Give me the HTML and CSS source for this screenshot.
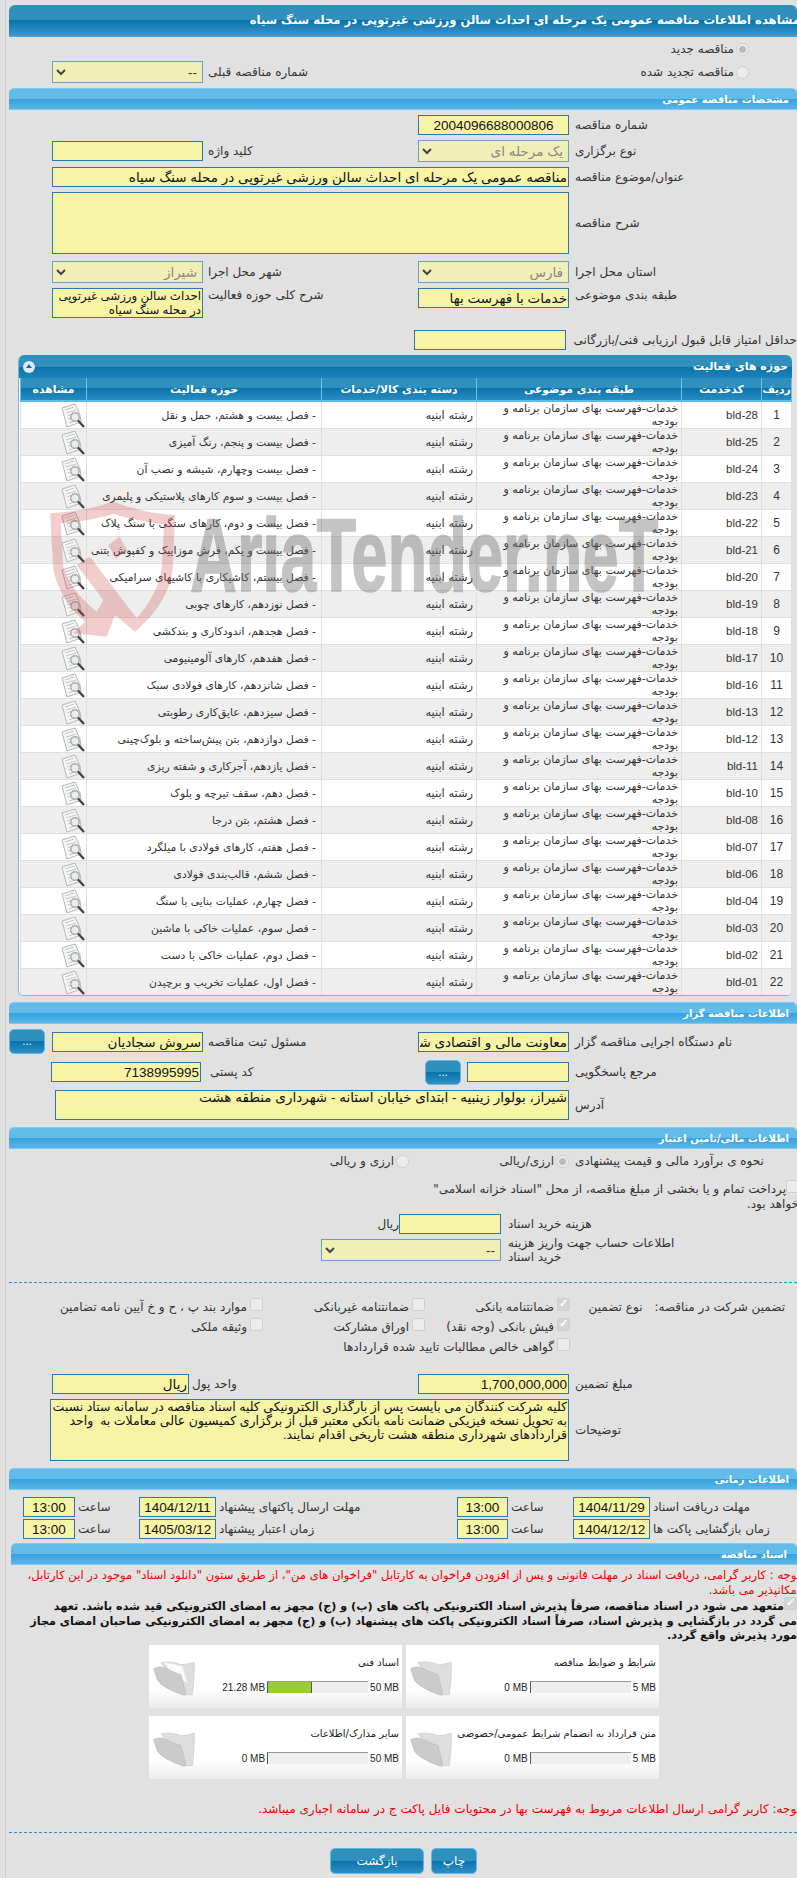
FILE: index.html
```html
<!DOCTYPE html>
<html lang="fa" dir="rtl">
	<head>
		<meta charset="utf-8">
		<title>مشاهده اطلاعات مناقصه</title>
		<link rel="stylesheet" href="styles.css">
	</head>
	<body>
		<svg class="defs" width="0" height="0">
			<symbol id="doc" viewBox="0 0 24 25">
				<path d="M1 5 L14 1 L19 12 L20 19 L6 24 Z" fill="#f6f6f6" stroke="#b5b5b5"/>
				<path d="M4 7 L13 4 M5 10 L15 7 M6 13 L11 11 M7 16 L10 15 M8 20 L14 18" stroke="#c4c4c4" fill="none"/>
				<circle cx="14" cy="14" r="4.2" fill="#e8eef0" stroke="#a9a9a9" stroke-width="1.4"/>
				<path d="M17 17.5 L23 24" stroke="#444" stroke-width="2.4"/>
			</symbol>
			<symbol id="folder" viewBox="0 0 126 108">
				<path d="M24 8 Q60 2 84 14 Q105 14 124 6 Q126 50 118 104 L94 104 Z" fill="#dedede" stroke="#cacaca" stroke-width="2"/>
				<path d="M2 26 Q20 16 40 26 Q70 40 84 44 L98 100 Q100 107 90 105 Q30 84 14 62 Z" fill="#cbcbcb" stroke="#b9b9b9" stroke-width="2"/>
			</symbol>
			<symbol id="folder-full" viewBox="0 0 126 108">
				<path d="M24 8 Q60 2 84 14 Q105 14 124 6 Q126 50 118 104 L94 104 Z" fill="#dedede" stroke="#cacaca" stroke-width="2"/>
				<path d="M30 6 L88 18 L104 70 L60 40 Z" fill="#fbfbfb" stroke="#e6e6e6" stroke-width="2"/>
				<path d="M2 26 Q20 16 40 26 Q70 40 84 44 L98 100 Q100 107 90 105 Q30 84 14 62 Z" fill="#cbcbcb" stroke="#b9b9b9" stroke-width="2"/>
			</symbol>
		</svg>

		<div class="page">
			<div class="bar-main"><span>مشاهده اطلاعات مناقصه عمومی یک مرحله ای احداث سالن ورزشی غیرتوپی در محله سنگ سیاه</span></div>

			<div class="radio-row"><input type="radio" name="kind" checked disabled><label>مناقصه جدید</label></div>
			<div class="grid mt5 h22">
				<div class="radio-cell"><input type="radio" name="kind" disabled><label>مناقصه تجدید شده</label></div>
				<label class="lbl2">شماره مناقصه قبلی</label>
				<select class="sel dark" disabled><option>--</option></select>
			</div>

			<div class="bar">مشخصات مناقصه عمومی</div>
			<div class="grid mt5 h20">
				<label class="lbl">شماره مناقصه</label>
				<input class="txt center" value="2004096688000806">
			</div>
			<div class="grid mt5 h22">
				<label class="lbl">نوع برگزاری</label>
				<select class="sel" disabled><option>یک مرحله ای</option></select>
				<label class="lbl2">کلید واژه</label>
				<input class="txt">
			</div>
			<div class="grid mt5 h20">
				<label class="lbl">عنوان/موضوع مناقصه</label>
				<input class="txt wide" value="مناقصه عمومی یک مرحله ای احداث سالن ورزشی غیرتوپی در محله سنگ سیاه">
			</div>
			<div class="grid mt5 h62">
				<label class="lbl">شرح مناقصه</label>
				<textarea class="txt wide"></textarea>
			</div>
			<div class="grid mt7 h22">
				<label class="lbl">استان محل اجرا</label>
				<select class="sel" disabled><option>فارس</option></select>
				<label class="lbl2">شهر محل اجرا</label>
				<select class="sel" disabled><option>شیراز</option></select>
			</div>
			<div class="grid mt5 h30 top">
				<label class="lbl">طبقه بندی موضوعی</label>
				<input class="txt h20" value="خدمات با فهرست بها">
				<label class="lbl2">شرح کلی حوزه فعالیت</label>
				<textarea class="txt scope">احداث سالن ورزشی غیرتوپی در محله سنگ سیاه</textarea>
			</div>
			<div class="grid mt12 h20">
				<label class="lbl">حداقل امتیاز قابل قبول ارزیابی فنی/بازرگانی</label>
				<input class="txt score">
			</div>

			<div class="panel">
				<div class="panel-head">
					<span>حوزه های فعالیت</span>
					<span class="toggle"></span>
				</div>
				<table class="acts">
					<colgroup>
						<col class="c-num"><col class="c-code"><col class="c-subj"><col class="c-cat"><col class="c-act"><col class="c-view">
					</colgroup>
					<thead>
						<tr><th>ردیف</th><th>کدخدمت</th><th>طبقه بندی موضوعی</th><th>دسته بندی کالا/خدمات</th><th>حوزه فعالیت</th><th>مشاهده</th></tr>
					</thead>
					<tbody>
						<tr><td class="mid">1</td><td class="code">bld-28</td><td class="subj">خدمات-فهرست بهای سازمان برنامه و بودجه</td><td>رشته ابنیه</td><td class="act">- فصل بیست و هشتم، حمل و نقل</td><td class="view"><svg><use href="#doc"/></svg></td></tr>
						<tr><td class="mid">2</td><td class="code">bld-25</td><td class="subj">خدمات-فهرست بهای سازمان برنامه و بودجه</td><td>رشته ابنیه</td><td class="act">- فصل بیست و پنجم، رنگ آمیزی</td><td class="view"><svg><use href="#doc"/></svg></td></tr>
						<tr><td class="mid">3</td><td class="code">bld-24</td><td class="subj">خدمات-فهرست بهای سازمان برنامه و بودجه</td><td>رشته ابنیه</td><td class="act">- فصل بیست وچهارم، شیشه و نصب آن</td><td class="view"><svg><use href="#doc"/></svg></td></tr>
						<tr><td class="mid">4</td><td class="code">bld-23</td><td class="subj">خدمات-فهرست بهای سازمان برنامه و بودجه</td><td>رشته ابنیه</td><td class="act">- فصل بیست و سوم کارهای پلاستیکی و پلیمری</td><td class="view"><svg><use href="#doc"/></svg></td></tr>
						<tr><td class="mid">5</td><td class="code">bld-22</td><td class="subj">خدمات-فهرست بهای سازمان برنامه و بودجه</td><td>رشته ابنیه</td><td class="act">- فصل بیست و دوم، کارهای سنگی با سنگ پلاک</td><td class="view"><svg><use href="#doc"/></svg></td></tr>
						<tr><td class="mid">6</td><td class="code">bld-21</td><td class="subj">خدمات-فهرست بهای سازمان برنامه و بودجه</td><td>رشته ابنیه</td><td class="act">- فصل بیست و یکم، فرش موزاییک و کفپوش بتنی</td><td class="view"><svg><use href="#doc"/></svg></td></tr>
						<tr><td class="mid">7</td><td class="code">bld-20</td><td class="subj">خدمات-فهرست بهای سازمان برنامه و بودجه</td><td>رشته ابنیه</td><td class="act">- فصل بیستم، کاشیکاری با کاشیهای سرامیکی</td><td class="view"><svg><use href="#doc"/></svg></td></tr>
						<tr><td class="mid">8</td><td class="code">bld-19</td><td class="subj">خدمات-فهرست بهای سازمان برنامه و بودجه</td><td>رشته ابنیه</td><td class="act">- فصل نوزدهم، کارهای چوبی</td><td class="view"><svg><use href="#doc"/></svg></td></tr>
						<tr><td class="mid">9</td><td class="code">bld-18</td><td class="subj">خدمات-فهرست بهای سازمان برنامه و بودجه</td><td>رشته ابنیه</td><td class="act">- فصل هجدهم، اندودکاری و بندکشی</td><td class="view"><svg><use href="#doc"/></svg></td></tr>
						<tr><td class="mid">10</td><td class="code">bld-17</td><td class="subj">خدمات-فهرست بهای سازمان برنامه و بودجه</td><td>رشته ابنیه</td><td class="act">- فصل هفدهم، کارهای آلومینیومی</td><td class="view"><svg><use href="#doc"/></svg></td></tr>
						<tr><td class="mid">11</td><td class="code">bld-16</td><td class="subj">خدمات-فهرست بهای سازمان برنامه و بودجه</td><td>رشته ابنیه</td><td class="act">- فصل شانزدهم، کارهای فولادی سبک</td><td class="view"><svg><use href="#doc"/></svg></td></tr>
						<tr><td class="mid">12</td><td class="code">bld-13</td><td class="subj">خدمات-فهرست بهای سازمان برنامه و بودجه</td><td>رشته ابنیه</td><td class="act">- فصل سیزدهم، عایق‌کاری رطوبتی</td><td class="view"><svg><use href="#doc"/></svg></td></tr>
						<tr><td class="mid">13</td><td class="code">bld-12</td><td class="subj">خدمات-فهرست بهای سازمان برنامه و بودجه</td><td>رشته ابنیه</td><td class="act">- فصل دوازدهم، بتن پیش‌ساخته و بلوک‌چینی</td><td class="view"><svg><use href="#doc"/></svg></td></tr>
						<tr><td class="mid">14</td><td class="code">bld-11</td><td class="subj">خدمات-فهرست بهای سازمان برنامه و بودجه</td><td>رشته ابنیه</td><td class="act">- فصل یازدهم، آجرکاری و شفته ریزی</td><td class="view"><svg><use href="#doc"/></svg></td></tr>
						<tr><td class="mid">15</td><td class="code">bld-10</td><td class="subj">خدمات-فهرست بهای سازمان برنامه و بودجه</td><td>رشته ابنیه</td><td class="act">- فصل دهم، سقف تیرچه و بلوک</td><td class="view"><svg><use href="#doc"/></svg></td></tr>
						<tr><td class="mid">16</td><td class="code">bld-08</td><td class="subj">خدمات-فهرست بهای سازمان برنامه و بودجه</td><td>رشته ابنیه</td><td class="act">- فصل هشتم، بتن درجا</td><td class="view"><svg><use href="#doc"/></svg></td></tr>
						<tr><td class="mid">17</td><td class="code">bld-07</td><td class="subj">خدمات-فهرست بهای سازمان برنامه و بودجه</td><td>رشته ابنیه</td><td class="act">- فصل هفتم، کارهای فولادی با میلگرد</td><td class="view"><svg><use href="#doc"/></svg></td></tr>
						<tr><td class="mid">18</td><td class="code">bld-06</td><td class="subj">خدمات-فهرست بهای سازمان برنامه و بودجه</td><td>رشته ابنیه</td><td class="act">- فصل ششم، قالب‌بندی فولادی</td><td class="view"><svg><use href="#doc"/></svg></td></tr>
						<tr><td class="mid">19</td><td class="code">bld-04</td><td class="subj">خدمات-فهرست بهای سازمان برنامه و بودجه</td><td>رشته ابنیه</td><td class="act">- فصل چهارم، عملیات بنایی با سنگ</td><td class="view"><svg><use href="#doc"/></svg></td></tr>
						<tr><td class="mid">20</td><td class="code">bld-03</td><td class="subj">خدمات-فهرست بهای سازمان برنامه و بودجه</td><td>رشته ابنیه</td><td class="act">- فصل سوم، عملیات خاکی با ماشین</td><td class="view"><svg><use href="#doc"/></svg></td></tr>
						<tr><td class="mid">21</td><td class="code">bld-02</td><td class="subj">خدمات-فهرست بهای سازمان برنامه و بودجه</td><td>رشته ابنیه</td><td class="act">- فصل دوم، عملیات خاکی با دست</td><td class="view"><svg><use href="#doc"/></svg></td></tr>
						<tr><td class="mid">22</td><td class="code">bld-01</td><td class="subj">خدمات-فهرست بهای سازمان برنامه و بودجه</td><td>رشته ابنیه</td><td class="act">- فصل اول، عملیات تخریب و برچیدن</td><td class="view"><svg><use href="#doc"/></svg></td></tr>
					</tbody>
				</table>
			</div>

			<div class="bar mt6">اطلاعات مناقصه گزار</div>
			<div class="grid mt5 h25">
				<label class="lbl">نام دستگاه اجرایی مناقصه گزار</label>
				<input class="txt" value="معاونت مالی و اقتصادی شهرداری">
				<label class="lbl2">مسئول ثبت مناقصه</label>
				<input class="txt" value="سروش سجادیان">
				<button class="btn dots">...</button>
			</div>
			<div class="grid mt5 h26">
				<label class="lbl">مرجع پاسخگویی</label>
				<div class="ref-cell">
					<input class="txt ref">
					<button class="btn dots">...</button>
				</div>
				<label class="lbl2 postal-lbl">کد پستی</label>
				<input class="txt postal" value="7138995995">
			</div>
			<div class="grid mt5 h30">
				<label class="lbl">آدرس</label>
				<textarea class="txt wide address">شیراز، بولوار زینبیه - ابتدای خیابان آستانه - شهرداری منطقه هشت</textarea>
			</div>

			<div class="bar mt7">اطلاعات مالی/تامین اعتبار</div>
			<div class="grid mt5 h14">
				<label class="lbl">نحوه ی برآورد مالی و قیمت پیشنهادی</label>
				<div class="radio-in"><input type="radio" name="cur" checked disabled><label>ارزی/ریالی</label></div>
				<div class="radio-in second"><input type="radio" name="cur" disabled><label>ارزی و ریالی</label></div>
			</div>
			<p class="treasury"><input type="checkbox" disabled>پرداخت تمام و یا بخشی از مبلغ مناقصه، از محل "اسناد خزانه اسلامی"<br>خواهد بود.</p>
			<div class="doc-row mt5 h20">
				<label class="lbl doc-lbl">هزینه خرید اسناد</label>
				<input class="txt fee">
				<span class="unit">ریال</span>
			</div>
			<div class="doc-row mt5 h22">
				<label class="lbl doc-lbl">اطلاعات حساب جهت واریز هزینه<br>خرید اسناد</label>
				<select class="sel dark account" disabled><option>--</option></select>
			</div>

			<div class="dash dash-a"></div>

			<div class="guar">
				<div class="guar-head"><span class="guar-title">تضمین شرکت در مناقصه:</span><span>نوع تضمین</span></div>
				<div class="chk"><input type="checkbox" checked disabled><label>ضمانتنامه بانکی</label></div>
				<div class="chk"><input type="checkbox" disabled><label>ضمانتنامه غیربانکی</label></div>
				<div class="chk"><input type="checkbox" disabled><label>موارد بند پ ، ح و خ آیین نامه تضامین</label></div>
				<div></div>
				<div class="chk"><input type="checkbox" checked disabled><label>فیش بانکی (وجه نقد)</label></div>
				<div class="chk"><input type="checkbox" disabled><label>اوراق مشارکت</label></div>
				<div class="chk"><input type="checkbox" disabled><label>وثیقه ملکی</label></div>
				<div></div>
				<div class="chk guar-long"><input type="checkbox" disabled><label>گواهی خالص مطالبات تایید شده قراردادها</label></div>
			</div>

			<div class="grid mt16 h20">
				<label class="lbl">مبلغ تضمین</label>
				<input class="txt" value="1,700,000,000">
				<div class="unit-cell">
					<label>واحد پول</label>
					<input class="txt currency" value="ریال">
				</div>
			</div>
			<div class="grid mt5 h62">
				<label class="lbl">توضیحات</label>
				<textarea class="txt wide note">کلیه شرکت کنندگان می بایست پس از بارگذاری الکترونیکی کلیه اسناد مناقصه در سامانه ستاد نسبت به تحویل نسخه فیزیکی ضمانت نامه بانکی معتبر قبل از برگزاری کمیسیون عالی معاملات به  واحد قراردادهای شهرداری منطقه هشت تاریخی اقدام نمایند.</textarea>
			</div>

			<div class="bar mt7">اطلاعات زمانی</div>
			<div class="times mt7">
				<label>مهلت دریافت اسناد</label><input class="txt" value="1404/11/29">
				<label>ساعت</label><input class="txt" value="13:00">
				<label>مهلت ارسال پاکتهای پیشنهاد</label><input class="txt" value="1404/12/11">
				<label>ساعت</label><input class="txt" value="13:00">
			</div>
			<div class="times mt2">
				<label>زمان بازگشایی پاکت ها</label><input class="txt" value="1404/12/12">
				<label>ساعت</label><input class="txt" value="13:00">
				<label>زمان اعتبار پیشنهاد</label><input class="txt" value="1405/03/12">
				<label>ساعت</label><input class="txt" value="13:00">
			</div>

			<div class="bar bar-docs">اسناد مناقصه</div>
			<p class="red notice">توجه : کاربر گرامی، دریافت اسناد در مهلت قانونی و پس از افزودن فراخوان به کارتابل "فراخوان های من"، از طریق ستون "دانلود اسناد" موجود در این کارتابل،<br>امکانپذیر می باشد.</p>
			<p class="pledge"><input type="checkbox" checked disabled>متعهد می شود در اسناد مناقصه، صرفاً پذیرش اسناد الکترونیکی پاکت های (ب) و (ج) مجهز به امضای الکترونیکی قید شده باشد. تعهد<br>می گردد در بازگشایی و پذیرش اسناد، صرفاً اسناد الکترونیکی پاکت های پیشنهاد (ب) و (ج) مجهز به امضای الکترونیکی صاحبان امضای مجاز<br>مورد پذیرش واقع گردد.</p>

			<div class="cards">
				<div class="card">
					<div class="card-body">
						<div class="card-title">شرایط و ضوابط مناقصه</div>
						<div class="meter"><span class="mb">5 MB</span><span class="track"></span><span class="mb">0 MB</span></div>
					</div>
					<svg class="folder"><use href="#folder"/></svg>
				</div>
				<div class="card">
					<div class="card-body">
						<div class="card-title">اسناد فنی</div>
						<div class="meter"><span class="mb">50 MB</span><span class="track"><span class="fill"></span></span><span class="mb">21.28 MB</span></div>
					</div>
					<svg class="folder"><use href="#folder-full"/></svg>
				</div>
				<div class="card">
					<div class="card-body">
						<div class="card-title">متن قرارداد به انضمام شرایط عمومی/خصوصی</div>
						<div class="meter"><span class="mb">5 MB</span><span class="track"></span><span class="mb">0 MB</span></div>
					</div>
					<svg class="folder"><use href="#folder"/></svg>
				</div>
				<div class="card">
					<div class="card-body">
						<div class="card-title">سایر مدارک/اطلاعات</div>
						<div class="meter"><span class="mb">50 MB</span><span class="track"></span><span class="mb">0 MB</span></div>
					</div>
					<svg class="folder"><use href="#folder"/></svg>
				</div>
			</div>

			<p class="red notice2">توجه: کاربر گرامی ارسال اطلاعات مربوط به فهرست بها در محتویات فایل پاکت ج در سامانه اجباری میباشد.</p>
			<div class="dash dash-b"></div>
			<div class="actions">
				<button class="btn print">چاپ</button>
				<button class="btn back">بازگشت</button>
			</div>

			<!-- watermark, lies over the table -->
			<svg class="wm-logo" viewBox="0 0 450 480">
				<path fill-rule="evenodd" d="M30 70 Q130 65 220 35 Q310 70 405 75 L398 240 Q385 340 285 425 L225 375 L200 440 L100 430 L135 395 Q60 330 40 240 Z M62 100 Q140 95 220 72 Q300 95 372 103 L365 235 Q355 310 290 385 L150 200 L110 225 L190 330 L170 365 Q90 300 70 230 Z"/>
				<path d="M205 165 L238 140 L262 180 L228 207 Z"/>
			</svg>
			<div class="wm-text">AriaTender.neT</div>
		</div>
	</body>
</html>
```

FILE: styles.css
```css
html, body {
	margin: 0;
	padding: 0;
	background: #e1e1e1;
}
body {
	font-family: "DejaVu Sans", Tahoma, sans-serif;
	font-size: 12px;
	color: #333;
}
.defs {
	position: absolute;
}
.page {
	position: relative;
	width: 797px;
	height: 1878px;
	overflow: hidden;
	box-sizing: border-box;
	padding: 5px 0 0 9px;
	background: linear-gradient(to right, #e1e1e1 5px, #cfcfcf 5px, #cfcfcf 6px, #e1e1e1 6px);
}

/* bars */
.bar-main {
	box-sizing: border-box;
	height: 32px;
	line-height: 30px;
	font-size: 11.6px;
	font-weight: bold;
	color: #fff;
	white-space: nowrap;
	border-radius: 6px 6px 0 0;
	border-bottom: 1px solid #4aa8e4;
	background: linear-gradient(#2f8fbd 0, #2f8fbd 50%, #0a72ab 50%, #4097cb 100%);
}
.bar-main span {
	display: inline-block;
	margin-right: -3px;
}
.bar {
	box-sizing: border-box;
	height: 22px;
	margin-top: 5px;
	padding-right: 8px;
	line-height: 21px;
	font-size: 10px;
	font-weight: bold;
	color: #fff;
	border-radius: 5px 5px 0 0;
	border-top: 1px solid #7ccbf2;
	border-bottom: 1px solid #7ccbf2;
	background: linear-gradient(#63bbe9 0, #63bbe9 50%, #36a1e0 50%, #5ab5e7 100%);
}
.bar-docs {
	margin-top: 4px;
	margin-left: 2px;
	padding-right: 10px;
}

/* form rows */
.grid {
	display: grid;
	grid-template-columns: 228px 156px 210px 151px 1fr;
	align-items: center;
}
.top {
	align-items: start;
}
.mt2 { margin-top: 2px; }
.mt5 { margin-top: 5px; }
.mt6 { margin-top: 6px; }
.mt7 { margin-top: 7px; }
.mt12 { margin-top: 12px; }
.mt16 { margin-top: 16px; }
.h14 { height: 14px; }
.h20 { height: 20px; }
.h22 { height: 22px; }
.h25 { height: 25px; }
.h26 { height: 26px; }
.h30 { height: 30px; }
.h62 { height: 62px; }

.lbl, .lbl2 {
	display: block;
	text-align: left;
	white-space: nowrap;
	line-height: 14px;
}
.lbl {
	padding-left: 6px;
}
.lbl2 {
	padding-left: 5px;
}

.txt {
	box-sizing: border-box;
	width: 151px;
	height: 20px;
	margin: 0;
	padding: 0 1px;
	border: 1px solid #2a78ad;
	border-radius: 0;
	outline: none;
	background: #f7f5a5;
	color: #111;
	font-family: "Liberation Sans", "DejaVu Sans", sans-serif;
	font-size: 13.5px;
}
textarea.txt {
	height: 30px;
	resize: none;
	overflow: hidden;
	font-size: 12.5px;
	line-height: 14px;
}
textarea.scope {
	font-size: 11.8px;
}
.center {
	text-align: center;
}
.wide {
	grid-column: span 3;
	width: 517px;
}
.grid textarea.wide {
	height: 100%;
}
.grid textarea.address {
	width: 514px;
	font-size: 13.5px;
}
.grid textarea.note {
	width: 519px;
}
.score {
	width: 152px;
	margin-right: 3px;
}
.postal {
	width: 150px;
	margin-right: 2px;
}
.postal-lbl {
	padding-left: 7px;
}
.ref-cell {
	display: flex;
	align-items: center;
	gap: 6px;
}
.ref {
	width: 102px;
}

.sel {
	box-sizing: border-box;
	width: 151px;
	height: 22px;
	margin: 0;
	padding: 0 5px 0 0;
	appearance: none;
	border: 1px solid #6d9fc0;
	border-radius: 0;
	opacity: 1;
	color: #888;
	font-family: "Liberation Sans", "DejaVu Sans", sans-serif;
	font-size: 13.5px;
	background: #f0efb6 url("data:image/svg+xml,%3Csvg xmlns='http://www.w3.org/2000/svg' width='10' height='7'%3E%3Cpath d='M1 1 L5 5 L9 1' fill='none' stroke='%23444' stroke-width='2'/%3E%3C/svg%3E") no-repeat left 3px center;
}
.dark {
	color: #333;
}
.account {
	width: 180px;
}

input[type=radio], input[type=checkbox] {
	appearance: none;
	box-sizing: border-box;
	flex: none;
	width: 13px;
	height: 13px;
	margin: 0;
	border: 1px solid #cfcfcf;
	background: #ececec;
}
input[type=radio] {
	border-radius: 50%;
	position: relative;
}
input[type=radio]:checked::after {
	content: "";
	position: absolute;
	top: 2px;
	left: 2px;
	width: 7px;
	height: 7px;
	border-radius: 50%;
	background: #bbb;
}
input[type=checkbox] {
	border-radius: 2px;
	position: relative;
}
input[type=checkbox]:checked {
	background: #d4d4d4;
}
input[type=checkbox]:checked::after {
	content: "✓";
	position: absolute;
	top: -2px;
	left: 1px;
	font-size: 11px;
	font-weight: bold;
	color: #fff;
}

.radio-row, .radio-cell, .radio-in {
	display: flex;
	align-items: center;
	gap: 2px;
}
.radio-row {
	height: 14px;
	margin-top: 5px;
	padding-right: 48px;
}
.radio-cell {
	grid-column: span 2;
	padding-right: 48px;
}
.radio-in.second {
	padding-right: 4px;
}

.treasury {
	width: 380px;
	height: 29px;
	margin: 12px -2px 0 0;
	line-height: 14.5px;
	white-space: nowrap;
}
.doc-row {
	display: flex;
	align-items: center;
}
.doc-lbl {
	width: 296px;
	box-sizing: border-box;
	padding-left: 7px;
}
.fee {
	width: 102px;
}
.unit {
	line-height: 14px;
}

.dash {
	border-top: 1px dashed #2c8ec0;
}
.dash-a {
	margin-top: 21px;
}
.dash-b {
	margin-top: 15px;
}

.guar {
	display: grid;
	grid-template-columns: 227px 145px 162px 1fr;
	grid-auto-rows: 20px;
	margin-top: 15px;
}
.guar-head {
	display: flex;
	padding-right: 12px;
	gap: 12px;
	line-height: 18px;
}
.chk {
	display: flex;
	gap: 3px;
	white-space: nowrap;
}
.chk label {
	line-height: 18px;
}
.guar-long {
	grid-column: span 3;
}

.unit-cell {
	grid-column: span 2;
	display: flex;
	align-items: center;
	justify-content: flex-end;
	gap: 3px;
}
.currency {
	width: 137px;
}

.times {
	display: grid;
	grid-template-columns: 147px 77px 65px 51px 241px 77px 64px 52px;
	align-items: center;
	height: 20px;
}
.times label {
	text-align: left;
	padding-left: 3px;
	white-space: nowrap;
}
.times .txt {
	width: 100%;
	text-align: center;
}

/* activity table */
.panel {
	margin: 5px 5px 0 9px;
	height: 641px;
	box-sizing: border-box;
	overflow: hidden;
	background: #fff;
	border-radius: 6px 6px 5px 5px;
	border-bottom: 1px solid #79b6dc;
	border-left: 1px solid #79b6dc;
}
.panel-head {
	display: flex;
	justify-content: space-between;
	align-items: center;
	height: 23px;
	padding: 0 4px 0 4px;
	font-size: 11px;
	font-weight: bold;
	color: #fff;
	background: linear-gradient(#2f8fbd 0, #2f8fbd 50%, #0a72ab 50%, #1d82ba 100%);
}
.toggle {
	position: relative;
	width: 12px;
	height: 12px;
	border-radius: 50%;
	background: #dfe8f4;
}
.toggle::after {
	content: "";
	position: absolute;
	top: 3px;
	left: 3px;
	border-left: 3px solid transparent;
	border-right: 3px solid transparent;
	border-bottom: 4px solid #1f6c9c;
}
.acts {
	width: 771px;
	margin-left: 2px;
	border-collapse: collapse;
	table-layout: fixed;
}
.c-num { width: 30px; }
.c-code { width: 80px; }
.c-subj { width: 205px; }
.c-cat { width: 155px; }
.c-act { width: 235px; }
.c-view { width: 66px; }
.acts th {
	box-sizing: border-box;
	height: 23px;
	padding: 0;
	font-size: 10.8px;
	color: #fff;
	border-left: 1px solid #6ec0ea;
	border-right: 1px solid #6ec0ea;
	border-bottom: 2px solid #5dbbe8;
	background: linear-gradient(#2f8fbd 0, #2f8fbd 45%, #0a72ab 45%, #2a8bc2 100%);
}
.acts td {
	box-sizing: border-box;
	height: 27px;
	padding: 0 3px;
	overflow: hidden;
	line-height: 13px;
	font-size: 11.4px;
	color: #333;
	border: 1px solid #dfdfdf;
}
.acts tbody tr:nth-child(even) {
	background: #eee;
}
.acts .mid {
	text-align: center;
	font-family: "Liberation Sans", sans-serif;
	font-size: 12px;
}
.acts .code {
	direction: ltr;
	text-align: right;
	font-family: "Liberation Sans", sans-serif;
	font-size: 11.5px;
}
.acts .subj {
	font-size: 11px;
}
.acts .act {
	padding: 0 5px 0 0;
	font-size: 10.8px;
	white-space: nowrap;
}
.acts .view {
	padding: 0;
}
.view svg {
	display: block;
	width: 24px;
	height: 25px;
	margin-right: 1px;
}

/* notes */
.red {
	color: #e00;
	margin: 0;
	white-space: nowrap;
	line-height: 14.5px;
}
.notice {
	height: 29px;
	margin: 3px -3px 0 0;
	font-size: 11.6px;
}
.notice2 {
	margin: 23px -3px 0 0;
}
.pledge {
	margin: 0;
	height: 48px;
	font-size: 11.2px;
	font-weight: bold;
	color: #111;
	white-space: nowrap;
	line-height: 14.5px;
}

/* document cards */
.cards {
	display: grid;
	grid-template-columns: 253px 253px;
	grid-auto-rows: 63px;
	gap: 8px 4px;
	margin: 0 138px 0 0;
}
.card {
	display: flex;
	background: linear-gradient(#fff 70%, #ececec 100%);
}
.card-body {
	flex: 1;
	padding: 0 3px 0 4px;
}
.card-title {
	margin-top: 11px;
	line-height: 14px;
	font-size: 10px;
	color: #222;
	white-space: nowrap;
}
.meter {
	display: flex;
	align-items: center;
	gap: 2px;
	margin-top: 11px;
	font-family: "Liberation Sans", sans-serif;
	font-size: 10px;
	color: #222;
}
.mb {
	direction: ltr;
	unicode-bidi: isolate;
}
.track {
	display: block;
	box-sizing: border-box;
	width: 101px;
	height: 12px;
	direction: ltr;
	background: #eee;
	border-top: 1px solid #999;
	border-left: 1px solid #555;
}
.fill {
	display: block;
	width: 43%;
	height: 100%;
	background: #9c3;
	border-right: 1px solid #555;
}
.folder {
	flex: none;
	width: 42px;
	height: 36px;
	margin: 15px 0 0 4px;
}

/* buttons */
.btn {
	box-sizing: border-box;
	margin: 0;
	padding: 0;
	color: #fff;
	font-family: inherit;
	font-size: 12px;
	border: 1px solid #5fb8e8;
	border-radius: 5px;
	background: linear-gradient(#2f8fbd 0, #2f8fbd 50%, #0a72ab 50%, #2f8fc4 100%);
}
.dots {
	width: 36px;
	height: 25px;
	margin-right: 7px;
	font-size: 10px;
}
.ref-cell .dots {
	margin-right: 0;
}
.actions {
	display: flex;
	gap: 7px;
	margin-top: 15px;
	padding-right: 320px;
}
.print {
	width: 46px;
	height: 26px;
}
.back {
	width: 94px;
	height: 26px;
}

/* watermark */
.wm-logo {
	position: absolute;
	left: 40px;
	top: 490px;
	width: 150px;
	height: 160px;
	fill: rgba(205, 60, 60, 0.26);
	pointer-events: none;
}
.wm-text {
	position: absolute;
	left: 190px;
	top: 497px;
	direction: ltr;
	font-family: "Liberation Sans", sans-serif;
	font-size: 104px;
	line-height: 116px;
	font-weight: bold;
	color: #6e6e6e;
	opacity: 0.4;
	-webkit-text-stroke: 1.5px #6e6e6e;
	white-space: nowrap;
	transform: scaleX(0.625);
	transform-origin: left top;
	pointer-events: none;
}
```
